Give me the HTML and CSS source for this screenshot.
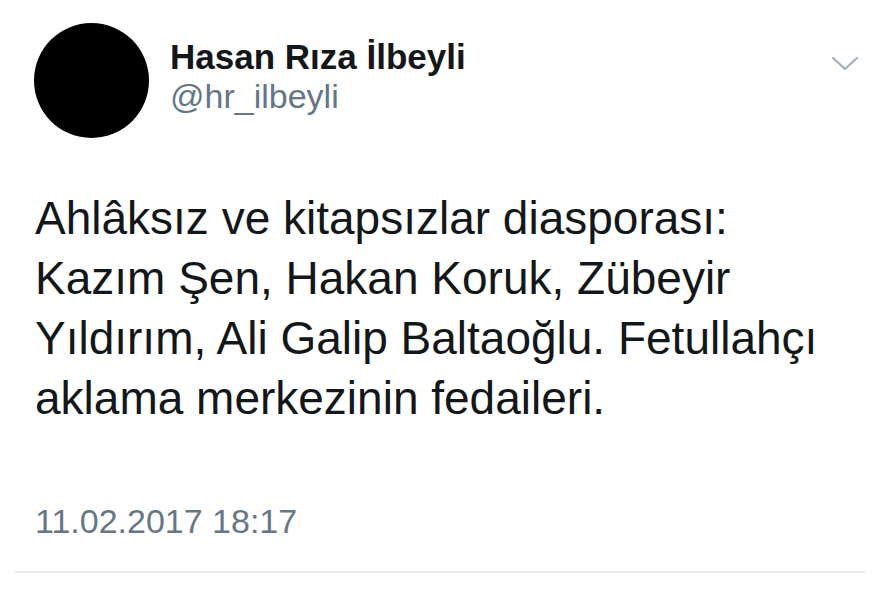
FILE: index.html
```html
<!DOCTYPE html>
<html lang="tr">
<head>
    <meta charset="UTF-8">
    <title>Tweet</title>
    <link rel="stylesheet" href="styles.css">
</head>
<body>
    <div class="tweet">
        <div class="header">
            <div class="avatar"></div>
            <div class="user">
                <div class="name">Hasan Rıza İlbeyli</div>
                <div class="handle">@hr_ilbeyli</div>
            </div>
            <svg class="caret" width="28" height="16" viewBox="0 0 28 16">
                <path d="M2 2 L14 13 L26 2" fill="none" stroke="#a4afb8" stroke-width="2.2" stroke-linecap="round" stroke-linejoin="round"/>
            </svg>
        </div>

        <div class="text">Ahlâksız ve kitapsızlar diasporası: Kazım Şen, Hakan Koruk, Zübeyir Yıldırım, Ali Galip Baltaoğlu. Fetullahçı aklama merkezinin fedaileri.</div>

        <div class="date">11.02.2017 18:17</div>

        <div class="divider"></div>
    </div>
</body>
</html>
```

FILE: styles.css
```css
body {
    margin: 0;
    background-color: white;
    font-family: "Liberation Sans", Arial, sans-serif;
    color: #14171a;
}

.tweet {
    padding: 23px 12px 0 15px;
}

.header {
    display: flex;
    align-items: flex-start;
}

.avatar {
    width: 115px;
    height: 115px;
    border-radius: 50%;
    background-color: #000;
    margin-left: 19px;
    flex-shrink: 0;
}

.user {
    margin-left: 21px;
    margin-top: 14px;
    flex: 1;
}

.name {
    font-size: 35px;
    font-weight: bold;
    line-height: 40px;
    color: #14171a;
}

.handle {
    font-size: 34px;
    line-height: 38px;
    color: #657786;
}

.caret {
    margin-top: 33px;
    margin-right: 6px;
}

.text {
    margin: 50px 0 0 20px;
    width: 815px;
    font-size: 46px;
    line-height: 60px;
}

.date {
    margin: 73px 0 0 20px;
    font-size: 34px;
    line-height: 40px;
    color: #657786;
}

.divider {
    margin-top: 30px;
    height: 2px;
    background-color: #e6ecf0;
}
```
